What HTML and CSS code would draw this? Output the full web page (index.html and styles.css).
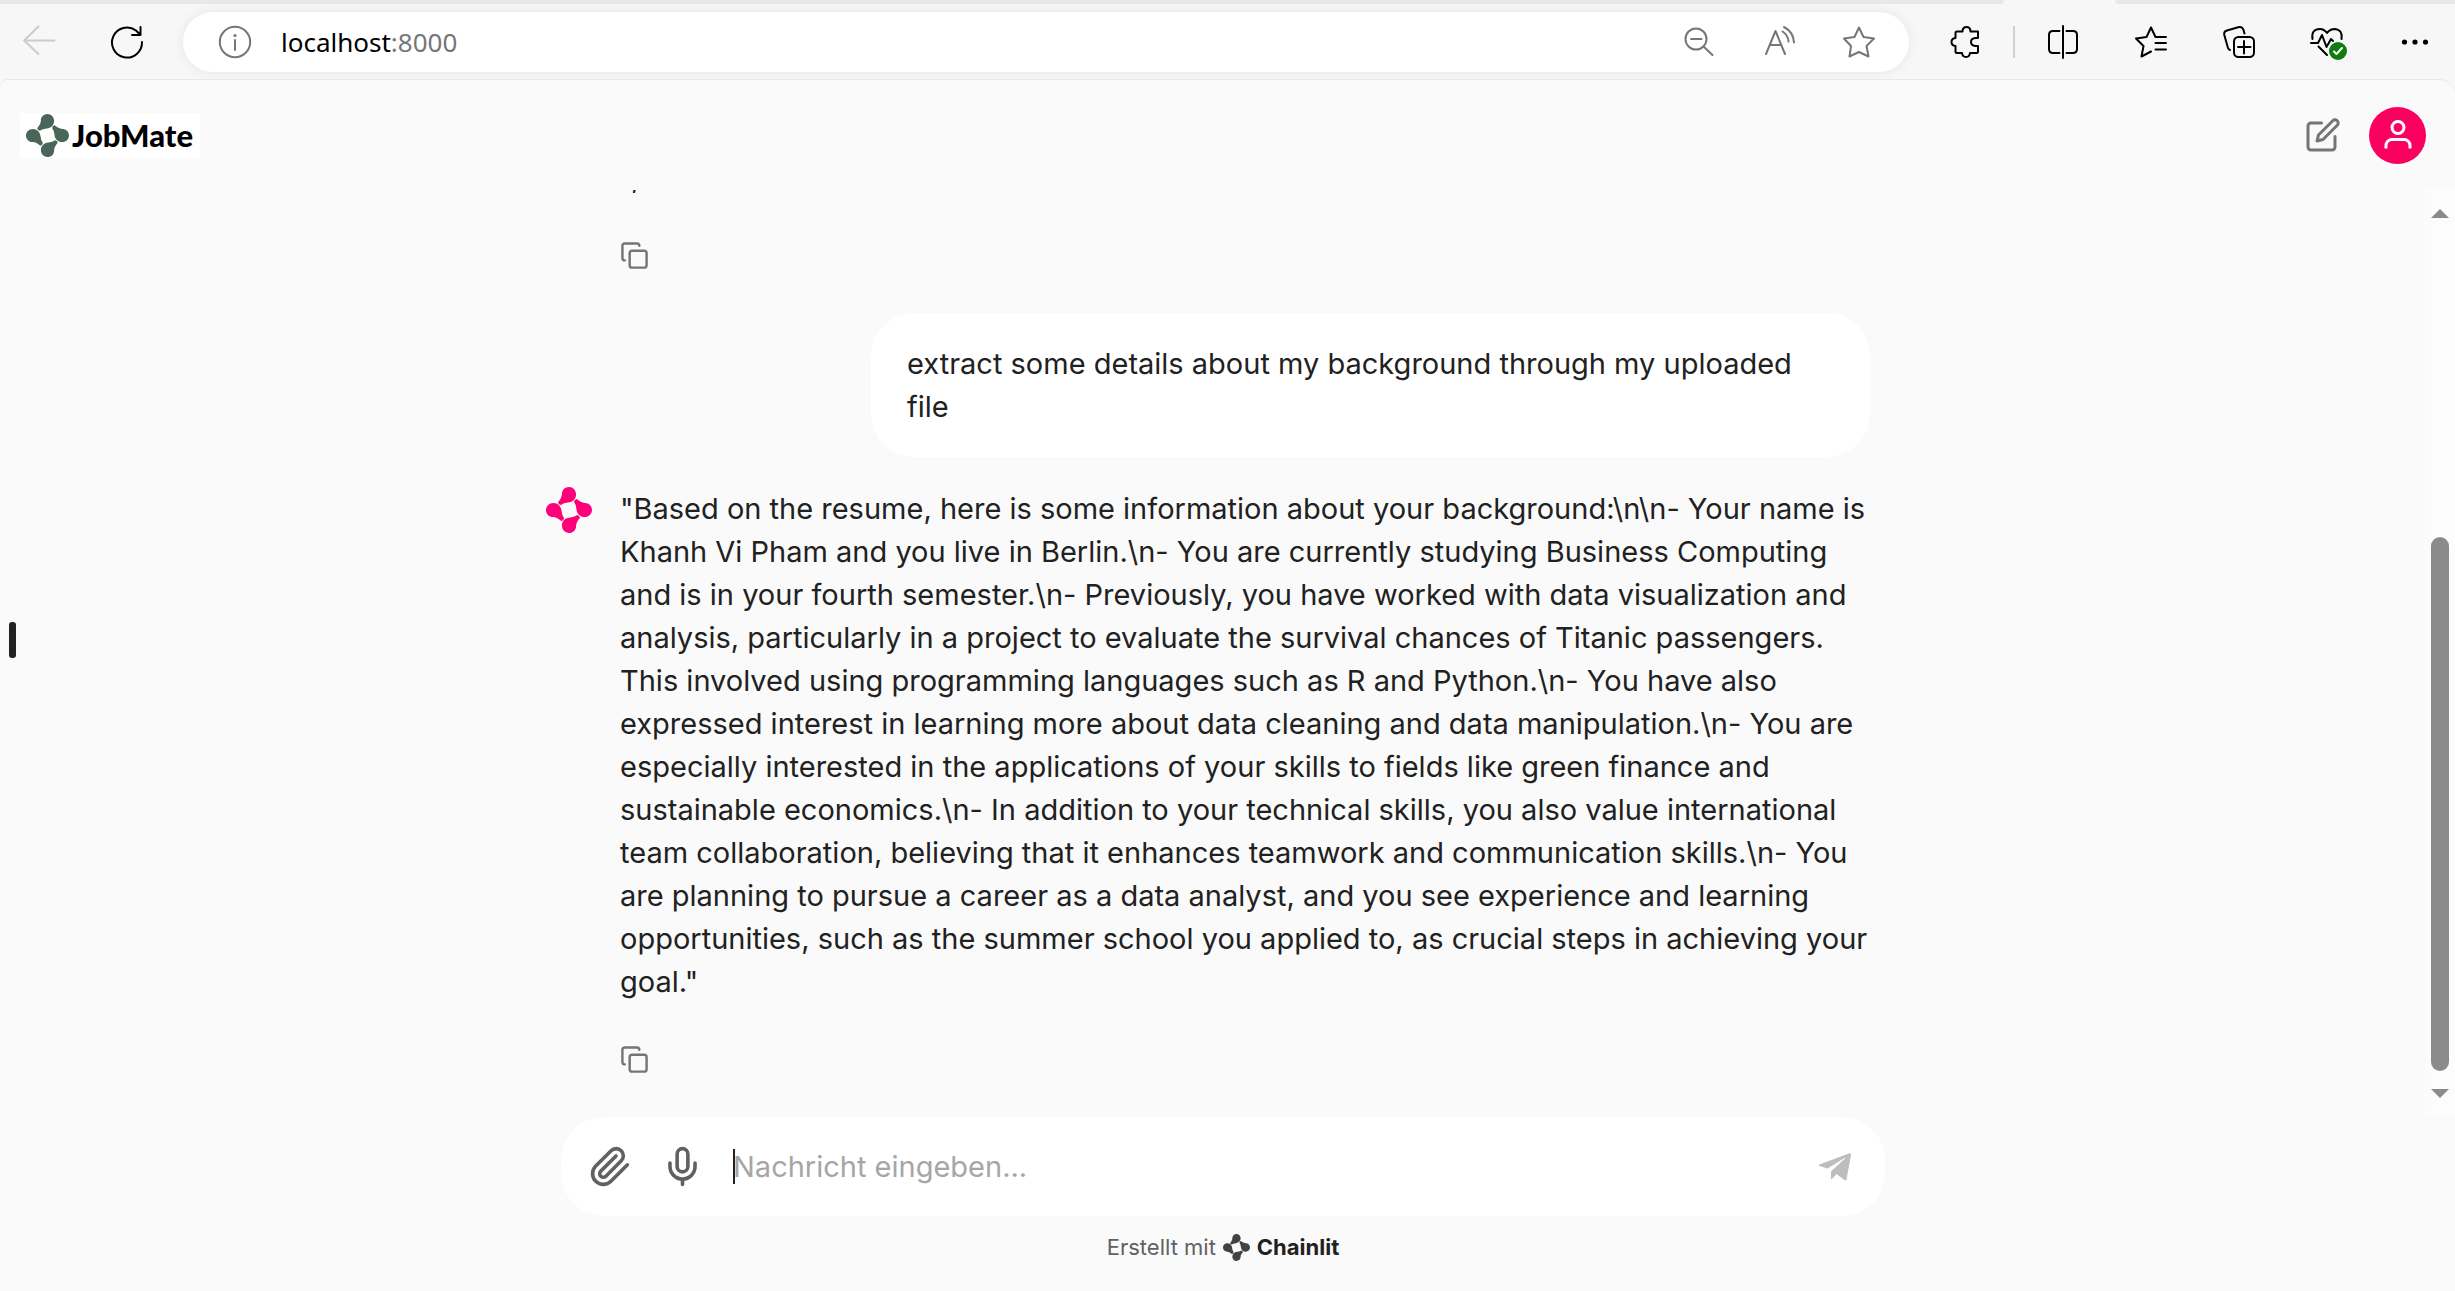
FILE: index.html
```html
<!DOCTYPE html>
<html lang="de">
<head>
<meta charset="utf-8">
<meta name="viewport" content="width=device-width, initial-scale=1">
<title>JobMate</title>
<link rel="stylesheet" href="styles.css">
</head>
<body>
<svg class="defs" aria-hidden="true">
  <defs>
    <path id="petal" d="M65 0C53 0 45 9 45 20C45 28 40 36 34 43Q35 50 42 51Q50 45 62 44C76 43 85 33 85 21C85 9 76 0 65 0Z"/>
    <g id="knot">
      <use href="#petal"/>
      <use href="#petal" transform="rotate(90 65 65)"/>
      <use href="#petal" transform="rotate(180 65 65)"/>
      <use href="#petal" transform="rotate(270 65 65)"/>
    </g>
    <g id="copy">
      <rect x="8" y="8" width="14" height="14" rx="2"/>
      <path d="M4 16c-1.100 0-2-.9-2-2V4c0-1.100.9-2 2-2h10c1.100 0 2 .9 2 2"/>
    </g>
    <linearGradient id="pink" x1="0" y1="0" x2="0" y2="130" gradientUnits="userSpaceOnUse">
      <stop offset="0" stop-color="#ff0080"/>
      <stop offset="1" stop-color="#ff0050"/>
    </linearGradient>
  </defs>
</svg>

<div class="browser">
  <div class="tabs"><span class="tab-rest tab-rest-left"></span><span class="tab-rest tab-rest-right"></span></div>
  <nav class="toolbar" aria-label="Browser">
    <button class="tool tool-disabled" aria-label="Zurück"><svg viewBox="0 0 32 32"><path d="M31.500 14.500H1M15.500 .5L1 14.500L15.500 28"/></svg></button>
    <button class="tool tool-reload" aria-label="Aktualisieren"><svg viewBox="0 0 32 32"><path d="M31 16A15 15 0 1 1 25 4.500L29.500 9M29.500 1V9H21"/></svg></button>
    <div class="address">
      <button class="tool" aria-label="Website-Informationen"><svg viewBox="0 0 32 32"><circle cx="16" cy="16" r="15.200"/><path d="M16 14V24"/><circle cx="16" cy="9.500" r="1.600" class="solid"/></svg></button>
      <span class="url">localhost<span class="port">:8000</span></span>
      <button class="tool" aria-label="Verkleinern"><svg viewBox="0 0 32 32"><circle cx="13" cy="13" r="10.500"/><path d="M8 13H18.500M20.500 20.500L29.500 29"/></svg></button>
      <button class="tool" aria-label="Vorlesen"><svg viewBox="0 0 32 32"><path d="M3 28L12.500 5L22 28M6.500 19H18.500M19.500 5.500Q25 9 25.500 15.500M21 1Q30.500 6 31 16.500"/></svg></button>
      <button class="tool" aria-label="Favorit"><svg viewBox="0 0 32 32"><path d="M16 1.500L20.500 11L31 12.500L23.500 20L25.500 30.500L16 26L6.500 30.500L8 20L1 12.500L11.500 11Z"/></svg></button>
    </div>
    <button class="tool tool-dark" aria-label="Erweiterungen"><svg viewBox="0 0 32 32"><path d="M7 5.500H12.500Q12.500 1 16.500 1Q20.500 1 20.500 5.500H28V12H25.500Q21 12.500 21 16Q21 19.500 25.500 20H28V25.500Q28 27 26.500 27H20Q19.500 31 16 31Q12.500 31 12 27H7Q5.500 27 5.500 25.500V20Q1.500 19.500 1.500 16Q1.500 12.500 5.500 12V7Q5.500 5.500 7 5.500Z"/></svg></button>
    <span class="divider"></span>
    <div class="tools">
      <button class="tool tool-dark" aria-label="Geteilter Bildschirm"><svg viewBox="0 0 32 32"><path d="M16 0V32M12.500 5H6Q2 5 2 9V23Q2 27 6 27H12.500M19.500 5H26Q30 5 30 9V23Q30 27 26 27H19.500"/></svg></button>
      <button class="tool tool-dark" aria-label="Favoriten"><svg viewBox="0 0 32 32"><path d="M31 11H20.500L16 1.500L11.500 11L1 12.500L8.500 20L6.500 30.500L16 25.500M20.500 17H31M20.500 23.500H31"/></svg></button>
      <button class="tool tool-dark" aria-label="Sammlungen"><svg viewBox="0 0 32 32"><rect x="11" y="11" width="20" height="20" rx="4.500"/><path d="M21 15V27.500M15 21H27.500M7 24Q5.500 23.500 5 22L1.300 9Q.5 5.500 4 4.500L16 1Q19.500 .5 20.500 4L21.500 7.500"/></svg></button>
      <button class="tool tool-dark" aria-label="Browser-Essentials"><svg viewBox="0 0 32 32"><path d="M1.500 13Q0 3 9 3Q13 3 16 7Q19 3 24 3Q32 4 30.500 13M0 17H7L11 9L15.500 21L20 13L22 15M7.500 20.500L16 29"/></svg><svg class="check" viewBox="0 0 18 18"><circle cx="9" cy="9" r="9"/><path d="M5 9.500L7.500 12L13 6"/></svg></button>
      <button class="tool tool-dark" aria-label="Mehr"><svg viewBox="0 0 32 32"><g class="solid"><circle cx="5.500" cy="16" r="2.600"/><circle cx="16" cy="16" r="2.600"/><circle cx="26.500" cy="16" r="2.600"/></g></svg></button>
    </div>
  </nav>
</div>

<div class="app">
  <header class="header">
    <a class="brand" href="#"><svg viewBox="0 0 130 130"><use href="#knot"/></svg><span>JobMate</span></a>
    <div class="actions">
      <button class="icon-button edit" aria-label="Neuer Chat"><svg viewBox="0 0 24 24"><path d="M11 4H4a2 2 0 0 0-2 2v14a2 2 0 0 0 2 2h14a2 2 0 0 0 2-2v-7"/><path d="M18.500 2.500a2.121 2.121 0 0 1 3 3L12 15l-4 1 1-4 9.500-9.500z"/></svg></button>
      <button class="icon-button avatar" aria-label="Profil"><svg viewBox="0 0 24 24"><circle cx="12" cy="7" r="4"/><path d="M20 21v-2a4 4 0 0 0-4-4H8a4 4 0 0 0-4 4v2"/></svg></button>
    </div>
  </header>

  <main class="chat">
    <div class="thread">
      <div class="column">
        <article class="message">
          <p class="text tail">,</p>
          <button class="icon-button copy" aria-label="Kopieren"><svg viewBox="0 0 24 24"><use href="#copy"/></svg></button>
        </article>
        <p class="bubble text">extract some details about my background through my uploaded file</p>
        <article class="message">
          <svg class="bot" viewBox="0 0 130 130" aria-hidden="true"><use href="#knot"/></svg>
          <p class="text">"Based on the resume, here is some information about your background:\n\n- Your name is Khanh Vi Pham and you live in Berlin.\n- You are currently studying Business Computing and is in your fourth semester.\n- Previously, you have worked with data visualization and analysis, particularly in a project to evaluate the survival chances of Titanic passengers. This involved using programming languages such as R and Python.\n- You have also expressed interest in learning more about data cleaning and data manipulation.\n- You are especially interested in the applications of your skills to fields like green finance and sustainable economics.\n- In addition to your technical skills, you also value international team collaboration, believing that it enhances teamwork and communication skills.\n- You are planning to pursue a career as a data analyst, and you see experience and learning opportunities, such as the summer school you applied to, as crucial steps in achieving your goal."</p>
          <button class="icon-button copy" aria-label="Kopieren"><svg viewBox="0 0 24 24"><use href="#copy"/></svg></button>
        </article>
      </div>
    </div>
    <div class="scrollbar" aria-hidden="true">
      <svg class="arrow" viewBox="0 0 18 9"><path d="M0 9L9 0L18 9Z"/></svg>
      <div class="track"><div class="thumb"></div></div>
      <svg class="arrow" viewBox="0 0 18 9"><path d="M0 0L9 9L18 0Z"/></svg>
    </div>
  </main>

  <footer class="footer">
    <form class="composer">
      <button type="button" class="icon-button" aria-label="Datei anhängen"><svg viewBox="0 0 24 24"><path d="m21.440 11.050-9.190 9.190a6 6 0 0 1-8.490-8.490l8.570-8.570A4 4 0 1 1 18 8.840l-8.590 8.570a2 2 0 0 1-2.830-2.830l8.490-8.480"/></svg></button>
      <button type="button" class="icon-button" aria-label="Aufnehmen"><svg viewBox="0 0 24 24"><path d="M12 2a3 3 0 0 0-3 3v7a3 3 0 0 0 6 0V5a3 3 0 0 0-3-3Z"/><path d="M19 10v2a7 7 0 0 1-14 0v-2M12 19v3"/></svg></button>
      <div class="field">
        <span class="caret"></span>
        <input type="text" aria-label="Nachricht" placeholder="Nachricht eingeben...">
      </div>
      <button type="button" class="icon-button send" aria-label="Senden"><svg viewBox="0 0 34 28"><path d="M31.500 .2Q33.200 0 33 1.800L28.500 26.500Q28 28 26.500 27L18.500 21L14 26Q13 26.500 13 25.500V18.500L27 5.500Q27.500 4.500 26.500 5L9.500 15.500L1.500 13Q0 12.200 1.500 11.400Z"/></svg></button>
    </form>
    <a class="credit" href="#"><span>Erstellt mit</span><svg viewBox="0 0 130 130"><use href="#knot"/></svg><strong>Chainlit</strong></a>
  </footer>
  <span class="handle"></span>
</div>
</body>
</html>
```
FILE: styles.css
```css
* {
  box-sizing: border-box;
}

body {
  margin: 0;
  height: 100vh;
  display: flex;
  flex-direction: column;
  background: #f7f7f7;
  color: #212121;
  font-family: Inter, "Liberation Sans", sans-serif;
}

button {
  padding: 0;
  border: 0;
  background: none;
  color: inherit;
  font: inherit;
}

p {
  margin: 0;
}

svg {
  display: block;
  overflow: visible;
}

.defs {
  position: absolute;
  width: 0;
  height: 0;
}

/* Browser chrome */

.tabs {
  display: flex;
  gap: 111px;
  height: 4px;
}

.tab-rest {
  background: #e8e8e8;
}

.tab-rest-left {
  flex: 1;
  border-bottom-right-radius: 12px;
}

.tab-rest-right {
  width: 340px;
  border-bottom-left-radius: 12px;
}

.toolbar {
  display: flex;
  align-items: center;
  height: 75px;
  padding: 0 24px 0 23px;
}

.tool {
  position: relative;
  flex: none;
  width: 32px;
  height: 32px;
  color: #767676;
}

.tool svg {
  width: 32px;
  height: 32px;
  fill: none;
  stroke: currentColor;
  stroke-width: 2;
  stroke-linecap: round;
  stroke-linejoin: round;
}

.tool .solid {
  fill: currentColor;
  stroke: none;
}

.tool-disabled {
  color: #cccccc;
}

.tool-reload {
  margin: 0 40px 0 56px;
  color: #000000;
}

.tool-dark {
  color: #000000;
}

.address {
  flex: 1;
  display: flex;
  align-items: center;
  gap: 48px;
  height: 60px;
  margin-right: 41px;
  padding: 0 34px 0 36px;
  border-radius: 30px;
  background: #ffffff;
  box-shadow: 0 0 12px rgba(0, 0, 0, 0.08);
}

.url {
  flex: 1;
  margin-left: -18px;
  color: #000000;
  font: 26px/36px "Noto Sans", sans-serif;
}

.port {
  color: #767676;
}

.divider {
  width: 2px;
  height: 32px;
  margin: 0 32px 0 31px;
  background: #d0d0d0;
}

.tools {
  display: flex;
  gap: 56px;
}

.tool .check {
  position: absolute;
  left: 18px;
  top: 16px;
  width: 18px;
  height: 18px;
  stroke: #ffffff;
}

.tool .check circle {
  fill: #107c10;
  stroke: none;
}

/* Application */

.app {
  position: relative;
  flex: 1;
  min-height: 0;
  display: flex;
  flex-direction: column;
  border-top: 1px solid #e8e8e8;
  border-radius: 8px 16px 0 0;
  background: #fafafa;
}

.header {
  display: flex;
  align-items: center;
  justify-content: space-between;
  height: 110px;
  padding: 0 29px 0 20px;
}

.brand {
  display: flex;
  align-items: center;
  gap: 3px;
  width: 180px;
  height: 45px;
  padding-left: 6px;
  background: #ffffff;
  color: #000000;
  font: 900 31px/43px Lato, sans-serif;
  text-decoration: none;
}

.brand svg {
  width: 43px;
  height: 43px;
  fill: #4a6658;
}

.actions {
  display: flex;
  align-items: center;
  gap: 28px;
}

.icon-button {
  flex: none;
  color: #616161;
}

.icon-button svg {
  width: 43px;
  height: 43px;
  fill: none;
  stroke: currentColor;
  stroke-width: 2;
  stroke-linecap: round;
  stroke-linejoin: round;
}

.edit svg {
  width: 36px;
  height: 36px;
  stroke: #757575;
}

.avatar {
  display: grid;
  place-items: center;
  width: 57px;
  height: 57px;
  border-radius: 50%;
  background: #fa0060;
  color: #ffffff;
}

.avatar svg {
  width: 36px;
  height: 36px;
  stroke-linecap: butt;
}

.chat {
  flex: 1;
  min-height: 0;
  display: flex;
}

.thread {
  flex: 1;
  display: flex;
  flex-direction: column;
  justify-content: flex-end;
  align-items: center;
  padding: 0 9px 43px 0;
  overflow: hidden;
}

.column {
  display: flex;
  flex-direction: column;
  width: 100%;
  max-width: 1324px;
}

.message {
  position: relative;
  padding-left: 74px;
}

.bot {
  position: absolute;
  left: 0;
  top: 0;
  width: 46px;
  height: 46px;
  fill: url(#pink);
}

.text {
  font-size: 29px;
  line-height: 43px;
}

.tail {
  padding-left: 11px;
}

.copy {
  display: block;
  margin-top: 42px;
}

.copy svg {
  width: 29px;
  height: 29px;
  stroke: #757575;
}

.bubble {
  align-self: flex-end;
  width: 999px;
  max-width: 100%;
  margin: 43px 0 30px;
  padding: 29px 36px;
  border-radius: 43px;
  background: #ffffff;
}

.scrollbar {
  display: flex;
  flex-direction: column;
  align-items: center;
  width: 30px;
  padding: 19px 0;
  background: #fcfcfc;
}

.arrow {
  width: 18px;
  height: 9px;
  fill: #8b8b8b;
}

.track {
  flex: 1;
  display: flex;
  flex-direction: column;
  justify-content: flex-end;
  padding: 18px 0;
}

.thumb {
  width: 18px;
  height: 64%;
  border-radius: 9px;
  background: #8b8b8b;
}

.footer {
  display: flex;
  flex-direction: column;
  align-items: center;
  gap: 15px;
  padding: 0 9px 28px 0;
}

.composer {
  display: flex;
  align-items: center;
  gap: 29px;
  width: 100%;
  max-width: 1324px;
  height: 99px;
  padding: 0 33px 0 28px;
  border-radius: 43px;
  background: #ffffff;
}

.field {
  position: relative;
  flex: 1;
}

.field input {
  display: block;
  width: 100%;
  padding: 0;
  border: 0;
  outline: 0;
  background: none;
  color: #212121;
  font: 29px/43px Inter, "Liberation Sans", sans-serif;
}

.field input::placeholder {
  color: #a6a6a6;
  opacity: 1;
}

.caret {
  position: absolute;
  left: 0;
  top: 4px;
  width: 2px;
  height: 35px;
  background: #212121;
}

.send svg {
  width: 34px;
  height: 28px;
  fill: #bdbdbd;
  stroke: none;
}

.credit {
  display: flex;
  align-items: center;
  gap: 7px;
  height: 32px;
  color: #616161;
  font-size: 22px;
  line-height: 32px;
  text-decoration: none;
}

.credit svg {
  width: 27px;
  height: 27px;
  fill: #424242;
}

.credit strong {
  color: #212121;
  font-weight: 700;
}

.handle {
  position: absolute;
  left: 9px;
  top: 50%;
  width: 7px;
  height: 36px;
  margin-top: -64px;
  border-radius: 3px;
  background: #212121;
}
```
